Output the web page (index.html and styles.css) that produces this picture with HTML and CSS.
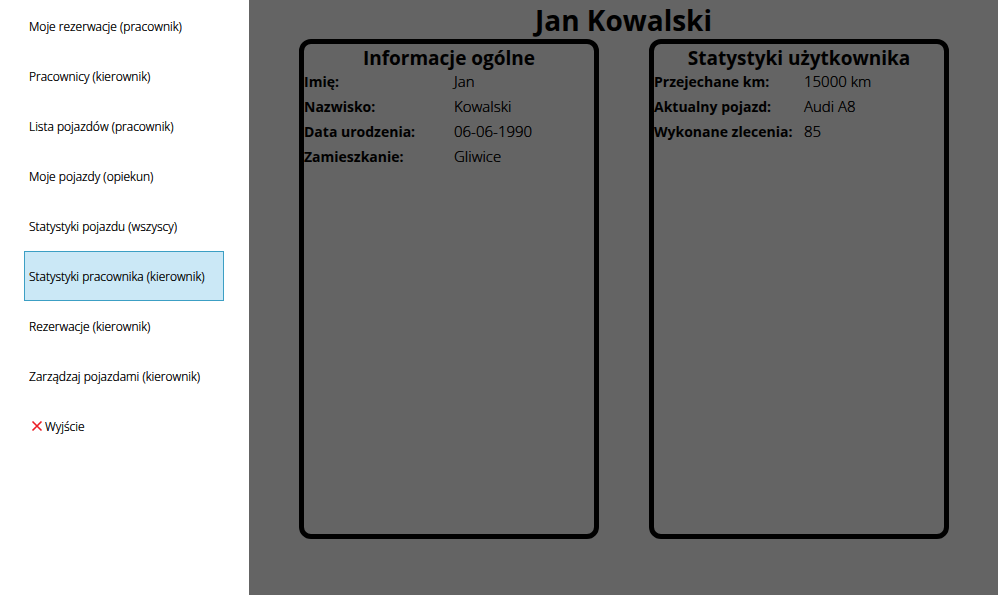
FILE: index.html
```html
<!DOCTYPE html>
<html lang="pl">
<head>
<meta charset="utf-8">
<title>Jan Kowalski</title>
<link rel="stylesheet" href="styles.css">
</head>
<body>
<div class="app">
  <nav class="menu">
    <a class="item" href="#">Moje rezerwacje (pracownik)</a>
    <a class="item" href="#">Pracownicy (kierownik)</a>
    <a class="item" href="#">Lista pojazdów (pracownik)</a>
    <a class="item" href="#">Moje pojazdy (opiekun)</a>
    <a class="item" href="#">Statystyki pojazdu (wszyscy)</a>
    <a class="item selected" href="#" aria-current="page">Statystyki pracownika (kierownik)</a>
    <a class="item" href="#">Rezerwacje (kierownik)</a>
    <a class="item" href="#">Zarządzaj pojazdami (kierownik)</a>
    <a class="item" href="#"><svg class="exit" viewBox="0 0 16 16" aria-hidden="true"><path d="M3.5 3.5L12.5 12.5M12.5 3.5L3.5 12.5" fill="none" stroke="#ec1c24" stroke-width="1.6"/></svg>Wyjście</a>
  </nav>
  <main class="content">
    <h1>Jan Kowalski</h1>
    <div class="cards">
      <section class="card">
        <h2>Informacje ogólne</h2>
        <dl>
          <dt>Imię:</dt><dd>Jan</dd>
          <dt>Nazwisko:</dt><dd>Kowalski</dd>
          <dt>Data urodzenia:</dt><dd>06-06-1990</dd>
          <dt>Zamieszkanie:</dt><dd>Gliwice</dd>
        </dl>
      </section>
      <section class="card">
        <h2>Statystyki użytkownika</h2>
        <dl>
          <dt>Przejechane km:</dt><dd>15000 km</dd>
          <dt>Aktualny pojazd:</dt><dd>Audi A8</dd>
          <dt>Wykonane zlecenia:</dt><dd>85</dd>
        </dl>
      </section>
    </div>
  </main>
</div>
</body>
</html>
```
FILE: styles.css
```css
* {
  box-sizing: border-box;
}

body {
  margin: 0;
  font-family: "Open Sans", sans-serif;
  color: #000;
}

.app {
  display: grid;
  grid-template-columns: 249px 1fr;
  min-height: 100vh;
}

.menu {
  display: flex;
  flex-direction: column;
  padding: 1px 25px 0 24px;
  background: #fff;
}

.item {
  display: flex;
  align-items: center;
  height: 50px;
  padding: 0 4px;
  border: 1px solid transparent;
  color: #000;
  font-size: 12px;
  font-weight: 300;
  text-decoration: none;
  text-shadow: 0 0 #000;
  white-space: nowrap;
}

.selected {
  background: #cbe8f6;
  border-color: #3c9fc4;
}

.exit {
  width: 16px;
  height: 16px;
}

.content {
  background: #646464;
}

h1 {
  margin: 0;
  padding-top: 2px;
  font-size: 28px;
  line-height: 37px;
  text-align: center;
}

.cards {
  display: grid;
  grid-template-columns: 1fr 1fr;
  gap: 50px;
  padding: 0 49px 0 50px;
}

.card {
  min-height: 500px;
  border: 5px solid #000;
  border-radius: 12px;
}

h2 {
  margin: 0;
  padding-top: 3px;
  font-size: 19px;
  line-height: 22px;
  text-align: center;
}

dl {
  display: grid;
  grid-template-columns: 150px 1fr;
  margin: 0;
  font-size: 14px;
  line-height: 25px;
  white-space: nowrap;
}

dt {
  font-weight: 700;
}

dd {
  margin: 0;
  font-size: 15px;
  font-weight: 300;
  text-shadow: 0 0 #000;
}
```
